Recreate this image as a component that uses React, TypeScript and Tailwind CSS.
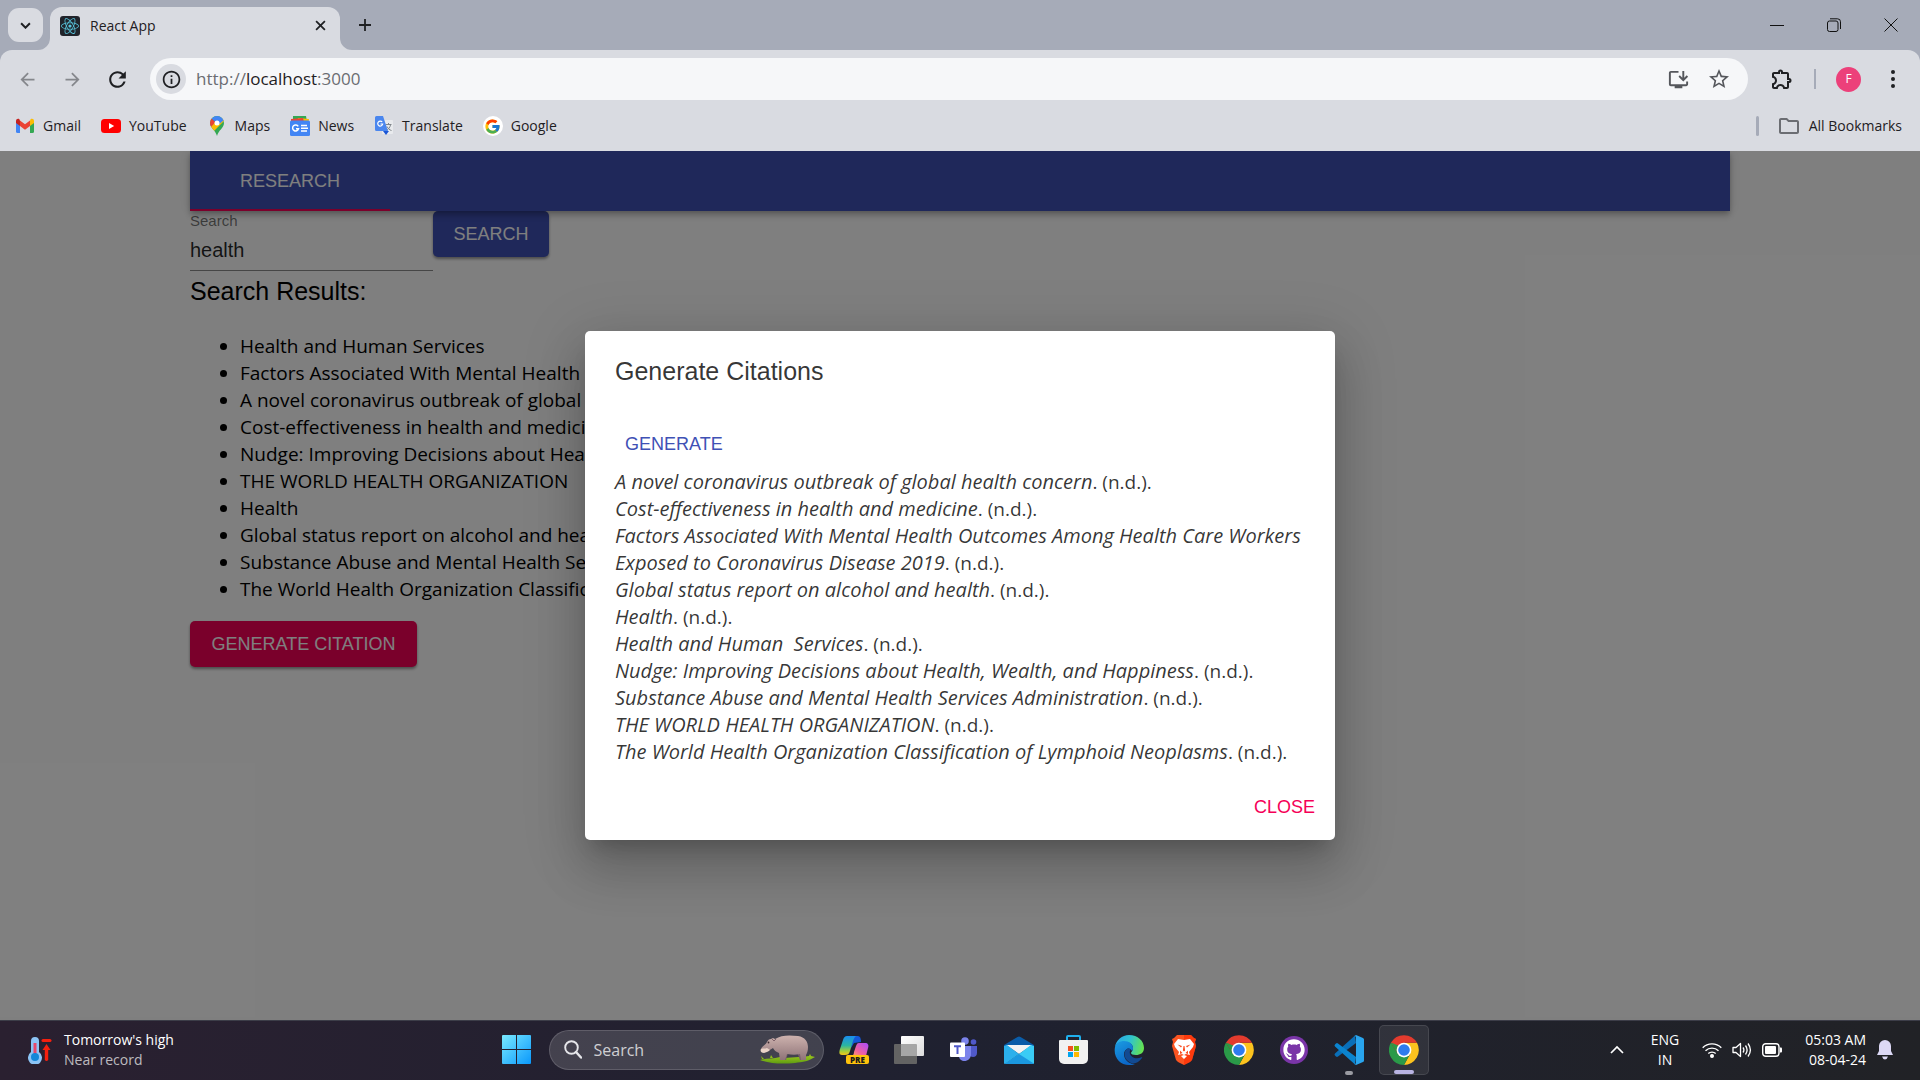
import React from 'react';
import { FaReact, FaGithub } from 'react-icons/fa';
import { FcGoogle } from 'react-icons/fc';
import { MdInstallDesktop, MdStarBorder, MdOutlineExtension, MdOutlineFolder, MdRefresh, MdArrowBack, MdArrowForward, MdInfoOutline } from 'react-icons/md';

const results = [
  'Health and Human Services',
  'Factors Associated With Mental Health',
  'A novel coronavirus outbreak of global',
  'Cost-effectiveness in health and medicine',
  'Nudge: Improving Decisions about Health',
  'THE WORLD HEALTH ORGANIZATION',
  'Health',
  'Global status report on alcohol and health',
  'Substance Abuse and Mental Health Services',
  'The World Health Organization Classification',
];

const citations = [
  'A novel coronavirus outbreak of global health concern',
  'Cost-effectiveness in health and medicine',
  'Factors Associated With Mental Health Outcomes Among Health Care Workers Exposed to Coronavirus Disease 2019',
  'Global status report on alcohol and health',
  'Health',
  'Health and Human\u00a0 Services',
  'Nudge: Improving Decisions about Health, Wealth, and Happiness',
  'Substance Abuse and Mental Health Services Administration',
  'THE WORLD HEALTH ORGANIZATION',
  'The World Health Organization Classification of Lymphoid Neoplasms',
];

function Gmail() {
  return (
    <svg viewBox="0 0 20 20" className="size-5">
      <path d="M1 5v10.500a1.500 1.500 0 0 0 1.500 1.500H5V9z" fill="#4285f4" />
      <path d="M19 5v10.500a1.500 1.500 0 0 1-1.500 1.500H15V9z" fill="#34a853" />
      <path d="M15 4.500V10l4-3V5c0-2-2-2.800-3.400-1.700z" fill="#fbbc04" />
      <path d="M5 10V4.500l5 3.800 5-3.800V10l-5 3.800z" fill="#ea4335" />
      <path d="M1 5v2l4 3V4.500l-.6-1.200C3 2.200 1 3 1 5z" fill="#c5221f" />
    </svg>
  );
}

function YouTube() {
  return (
    <svg viewBox="0 0 20 20" className="size-5">
      <rect y="3" width="20" height="14" rx="3.500" fill="#f00" />
      <path d="M8 7v6l5.200-3z" fill="#fff" />
    </svg>
  );
}

function Maps() {
  return (
    <svg viewBox="0 0 20 20" className="size-5">
      <defs>
        <clipPath id="pin">
          <path d="M10 0a7 7 0 0 0-7 7c0 5 5.500 7 7 13 1.500-6 7-8 7-13a7 7 0 0 0-7-7z" />
        </clipPath>
      </defs>
      <g clipPath="url(#pin)">
        <rect width="20" height="20" fill="#34a853" />
        <path d="M2 13L12.500 1 18 4 5 17z" fill="#fbbc04" />
        <path d="M4.500 2.500l4 3.500L3 12 1 5z" fill="#ea4335" />
        <path d="M4.500 2.500L9 -1h8v5l-6 5-2.500-3z" fill="#4285f4" />
      </g>
      <circle cx="10" cy="7" r="2.500" fill="#fff" />
    </svg>
  );
}

function News() {
  return (
    <svg viewBox="0 0 20 20" className="size-5">
      <path d="M3 0h13l1 6H3z" fill="#34a853" />
      <path d="M8 2l11 1-1 5H6z" fill="#fbbc04" />
      <path d="M1 3l12-1 1 4H1z" fill="#ea4335" />
      <rect y="4.500" width="20" height="15.500" rx="1.500" fill="#4285f4" />
      <path d="M8.200 10.400A3 3 0 1 0 8.500 12.800H6M11 9.500h6M11 12.300h7M11 15h6" fill="none" stroke="#fff" strokeWidth="1.500" />
    </svg>
  );
}

function Translate() {
  return (
    <svg viewBox="0 0 20 20" className="size-5">
      <rect x="8" y="4" width="11" height="14" rx="1" fill="#e8eaed" />
      <path d="M11.500 8.500h6M14.500 7v1.500M16.500 9c-.5 2.500-2 4-4 5.500M13 10.500c1 2 2.500 3.500 4.500 4" stroke="#80868b" fill="none" />
      <path d="M9 15h6l-3 4z" fill="#1a56d6" />
      <path d="M2.500 0H9l5 15H2.500A1.500 1.500 0 0 1 1 13.500v-12A1.500 1.500 0 0 1 2.500 0z" fill="#4a86ee" />
      <path d="M8.200 6A2.500 2.500 0 1 0 8.700 8H6.500" fill="none" stroke="#fff" strokeWidth="1.200" />
    </svg>
  );
}

function Google() {
  return (
    <span className="flex size-5 items-center justify-center rounded-full bg-white">
      <FcGoogle className="size-[17px]" />
    </span>
  );
}

const bookmarks = [
  { name: 'Gmail', Icon: Gmail },
  { name: 'YouTube', Icon: YouTube },
  { name: 'Maps', Icon: Maps },
  { name: 'News', Icon: News },
  { name: 'Translate', Icon: Translate },
  { name: 'Google', Icon: Google },
];

function Start() {
  return (
    <svg viewBox="0 0 29 29" className="size-[29px]">
      <defs>
        <linearGradient id="win" x1="0" y1="0" x2="1" y2="1">
          <stop offset="0" stopColor="#7aeaff" />
          <stop offset="1" stopColor="#0a98fb" />
        </linearGradient>
      </defs>
      <path d="M1 0h13v14H0V1a1 1 0 0 1 1-1zM15 0h13a1 1 0 0 1 1 1v13H15zM0 15h14v14H1a1 1 0 0 1-1-1zM15 15h14v13a1 1 0 0 1-1 1H15z" fill="url(#win)" />
    </svg>
  );
}

function Hippo() {
  return (
    <svg viewBox="0 0 56 30" className="h-[30px] w-[56px]">
      <defs>
        <linearGradient id="hide" x1="0" y1="0" x2="0" y2="1">
          <stop offset="0" stopColor="#cdb2ae" />
          <stop offset="1" stopColor="#8f7478" />
        </linearGradient>
        <linearGradient id="grass" x1="0" y1="0" x2="0" y2="1">
          <stop offset="0" stopColor="#a6cf1d" />
          <stop offset="1" stopColor="#5f9c12" />
        </linearGradient>
      </defs>
      <path d="M0 25c7-2 13-1 20-3l4 1 15-1 2-2 1 2 7-1 1-2 1 2 4 1c-6 4-12 5-20 6-12 1-24 1-35-3z" fill="url(#grass)" />
      <path d="M2 24l-1-3 3 3zM10 23l1-3 2 3z" fill="#8fbf1a" />
      <path d="M23 16l-1 9h4l2-7zM37 17l3 8h5l-1-9z" fill="#77606a" />
      <path d="M1 14c1-3 5-4 6-7 1-2 2-3 4-3l2-1 2 1C21 0 29 0 38 1c7 1 10 6 10 11 0 4-1 6-2 8v5h-5l-1-6c-4 1-8 1-13 0l-2 6h-5l-1-7c-3-1-5-3-6-5-2 1-4 3-8 4-3 1-5-1-4-3z" fill="url(#hide)" />
      <path d="M1 14c2-1 4 0 6-1l3 2c-2 2-4 2-6 3-3 0-4-2-3-4z" fill="#ead3c8" />
      <circle cx="8.500" cy="7.500" r="0.900" fill="#3c2a30" />
      <path d="M12 4l2 2 2-2" fill="none" stroke="#80626a" />
    </svg>
  );
}

function Copilot() {
  return (
    <svg viewBox="0 0 30 30" className="size-[30px]">
      <defs>
        <linearGradient id="cpa" x1="0" y1="0" x2="0" y2="1">
          <stop offset="0" stopColor="#1a8df0" />
          <stop offset="0.500" stopColor="#2bb6a0" />
          <stop offset="0.800" stopColor="#a5cf3a" />
          <stop offset="1" stopColor="#f5c518" />
        </linearGradient>
        <linearGradient id="cpb" x1="1" y1="0" x2="0" y2="1">
          <stop offset="0" stopColor="#a94bff" />
          <stop offset="0.600" stopColor="#f0609e" />
          <stop offset="1" stopColor="#ffa35c" />
        </linearGradient>
      </defs>
      <path d="M13 1h6c2 0 3 2 3 6l-7 1-3 5z" fill="#1458d8" />
      <path d="M8 1h10c-2 0-3 2-4 5l-3 10c-1 3-2 4-5 4H3c-3 0-3-3-2-6L4 5c1-3 2-4 4-4z" fill="url(#cpa)" />
      <path d="M20 8h6c3 0 4 2 3 5l-2 8H12c2 0 3-2 3-4l2-6c1-2 1-3 3-3z" fill="url(#cpb)" />
      <rect x="7" y="20" width="23" height="9" rx="2" fill="#ffc30b" />
      <text x="18.500" y="27.500" textAnchor="middle" fontSize="8" fontWeight="800" fontFamily="Open Sans, sans-serif" fill="#1b1b1b">PRE</text>
    </svg>
  );
}

function TaskView() {
  return (
    <svg viewBox="0 0 30 28" className="h-[28px] w-[30px]">
      <defs>
        <linearGradient id="tv" x1="0" y1="0" x2="1" y2="1">
          <stop offset="0" stopColor="#fff" />
          <stop offset="1" stopColor="#dcdcdc" />
        </linearGradient>
      </defs>
      <rect x="0" y="8" width="23" height="20" rx="1" fill="#636363" />
      <rect x="7" y="0" width="23" height="20" rx="1" fill="url(#tv)" />
      <path d="M7 8h15a1 1 0 0 1 1 1v11H8a1 1 0 0 1-1-1z" fill="#a6a6a6" />
    </svg>
  );
}

function Teams() {
  return (
    <svg viewBox="0 0 28 26" className="h-[26px] w-[28px]">
      <circle cx="23.500" cy="5" r="2.800" fill="#5059c9" />
      <path d="M19 9h8v7c0 4-4 5-7 3z" fill="#5059c9" />
      <circle cx="15" cy="4" r="3.800" fill="#7b83eb" />
      <path d="M10 9h11v8c0 9-12 9-12 2z" fill="#7b83eb" />
      <rect y="5.500" width="15" height="14.500" rx="1" fill="#fff" />
      <path d="M4 9.200h7M7.500 9v8" stroke="#5059c9" strokeWidth="2" fill="none" />
    </svg>
  );
}

function Mail() {
  return (
    <svg viewBox="0 0 30 28" className="h-[28px] w-[30px]">
      <path d="M0 9L13.500 1q1.500-1 3 0L30 9v3H0z" fill="#0a5ca8" />
      <path d="M2 9h26L15 18z" fill="#f3f3f3" />
      <path d="M0 10l3-1 12 9-14 10a1 1 0 0 1-1-1z" fill="#2bb0ec" />
      <path d="M30 10v17a1 1 0 0 1-1 1H1L15 18l12-9z" fill="#3accf5" />
      <path d="M15 18l14.800 9.500L29 28H1z" fill="#1b98e0" />
    </svg>
  );
}

function Store() {
  return (
    <svg viewBox="0 0 29 29" className="size-[29px]">
      <path d="M8 6V2a1 1 0 0 1 1-1h11a1 1 0 0 1 1 1v4" fill="none" stroke="#1fb0ee" strokeWidth="2" />
      <path d="M0 6a1 1 0 0 1 1-1h27a1 1 0 0 1 1 1v18a5 5 0 0 1-5 5H5a5 5 0 0 1-5-5z" fill="#f1f1f1" />
      <path d="M9 11h5v5H9z" fill="#f25022" />
      <path d="M15 11h5v5h-5z" fill="#7fba00" />
      <path d="M9 17h5v5H9z" fill="#00a4ef" />
      <path d="M15 17h5v5h-5z" fill="#ffb900" />
    </svg>
  );
}

function Edge() {
  return (
    <svg viewBox="0 0 30 30" className="size-[30px]">
      <defs>
        <linearGradient id="ea" x1="0" y1="0.300" x2="1" y2="0.500">
          <stop offset="0" stopColor="#2aa7e8" />
          <stop offset="0.500" stopColor="#2fc3cf" />
          <stop offset="1" stopColor="#66e34f" />
        </linearGradient>
        <linearGradient id="eb" x1="0" y1="0" x2="0.500" y2="1">
          <stop offset="0" stopColor="#1b9de2" />
          <stop offset="1" stopColor="#0b66c8" />
        </linearGradient>
      </defs>
      <path d="M1 12C2 5 8 0 15 0c9 0 15 6 15 13 0 5-4 7-8 7-3 0-5-1-5-2s2-2 2-5c0-4-4-6-8-6-5 0-9 2-10 5z" fill="url(#ea)" />
      <path d="M1 12c1-4 5-6 9-6 5 0 9 3 9 7 0 1 0 2-1 3-1-2-3-3-5-2-4 2-4 8 0 12 3 3 7 3 8 3-2 1-4 1-6 1C6 30-1 22 1 12z" fill="url(#eb)" />
      <path d="M13 14c-4 3-3 9 1 12 4 4 10 3 14-3 .5-.8 0-1-.6-.8C22 25 17 22 16 19c-.6-2 0-4 1-4-1-1-2-2-4-1z" fill="#124a92" />
    </svg>
  );
}

function Brave() {
  return (
    <svg viewBox="0 0 26 30" className="h-[30px] w-[26px]">
      <path d="M6 0h14l3 3 2 1-1 3 1 4-4 14-2 2-6 3-6-3-2-2L1 11l1-4-1-3 2-1z" fill="#fb5421" />
      <path d="M13 0h7l3 3 2 1-1 3 1 4-4 14-2 2-6 3z" fill="#ff2a00" opacity=".6" />
      <path d="M7 4l6 1 6-1 4 5-1 3-4 5 1 3-4-1-2 1-2-1-4 1 1-3-4-5-1-3zM10 21l3-1 3 1-3 3z" fill="#fff" />
      <path d="M6.500 9.500l4.500 1.500-1 1.500zM19.500 9.500L15 11l1 1.500zM12.500 11h1l.6 4.500-1.100 1-1.100-1zM9 15.500l2.500 2.500L9 19zM17 15.500L14.500 18l2.500 1z" fill="#fb4a1c" />
    </svg>
  );
}

function Chrome() {
  return (
    <svg viewBox="0 0 48 48" className="size-[30px]">
      <path d="M24 12.500h20.800A24 24 0 0 1 24 48l10-18z" fill="#fcc31e" />
      <path d="M3.200 12l10.900 18L24 35.500l9.500-5.500L24 48A24 24 0 0 1 3.200 12z" fill="#2a9a48" />
      <path d="M3.200 12A24 24 0 0 1 44.800 12.500H24L14 30z" fill="#e33b2e" />
      <path d="M3.200 12l10.900 18 3-12z" fill="#2a9a48" />
      <circle cx="24" cy="24" r="11.800" fill="#fff" />
      <circle cx="24" cy="24" r="9.300" fill="#2e7bee" />
    </svg>
  );
}

function GithubDesktop() {
  return (
    <span className="flex size-7 items-center justify-center rounded-full bg-[#7a35a8]">
      <FaGithub className="size-[22px] text-white" />
    </span>
  );
}

function VsCode() {
  return (
    <svg viewBox="0 0 30 30" className="size-[30px]">
      <path d="M1 18.500L21 0.500 22 8 4 21.500q-1 .8-2 0l-1-1q-1-1 0-2z" fill="#0a6fb8" />
      <path d="M1 11.500L21 29.500 22 22 4 8.500q-1-.8-2 0l-1 1q-1 1 0 2z" fill="#0b84cf" />
      <path d="M22 0l7 3q1 .5 1 1.500v21q0 1-1 1.500l-7 3-1.500-1Q22 29 22 27.500v-25Q22 1 20.500 1z" fill="#29a5ee" />
    </svg>
  );
}

const taskbarApps = [
  { name: 'Copilot', Icon: Copilot },
  { name: 'Task View', Icon: TaskView },
  { name: 'Teams', Icon: Teams },
  { name: 'Mail', Icon: Mail },
  { name: 'Microsoft Store', Icon: Store },
  { name: 'Edge', Icon: Edge },
  { name: 'Brave', Icon: Brave },
  { name: 'Chrome', Icon: Chrome },
  { name: 'GitHub Desktop', Icon: GithubDesktop },
  { name: 'Visual Studio Code', Icon: VsCode, running: true },
  { name: 'Chrome window', Icon: Chrome, active: true },
];

function TabStrip() {
  return (
    <div className="flex h-[50px] items-start bg-[#a6abb8] pl-2">
      <button aria-label="Search tabs" className="mt-2 flex h-[34px] w-[35px] items-center justify-center rounded-[11px] bg-[#d9dbe1]">
        <svg viewBox="0 0 10 6" className="h-[7px] w-[11px]"><path d="M1 1l4 4 4-4" fill="none" stroke="#1f2023" strokeWidth="1.800" /></svg>
      </button>
      <div className="relative ml-[7px] mt-[7px] flex h-[43px] w-[290px] items-center rounded-t-[12px] bg-[#d9dbe1] pb-[6px] pl-[10px] pr-[12px]">
        <svg viewBox="0 0 12 12" className="absolute -left-3 bottom-0 size-3"><path d="M12 0v12H0A12 12 0 0 0 12 0z" fill="#d9dbe1" /></svg>
        <svg viewBox="0 0 12 12" className="absolute -right-3 bottom-0 size-3"><path d="M0 0v12h12A12 12 0 0 1 0 0z" fill="#d9dbe1" /></svg>
        <span className="flex size-5 items-center justify-center rounded-[3px] bg-[#20232a]"><FaReact className="size-[18px] text-[#58c4dc]" /></span>
        <span className="ml-[10px] flex-1 text-sm text-[#1f2023]">React App</span>
        <button aria-label="Close tab" className="flex size-4 items-center justify-center">
          <svg viewBox="0 0 10 10" className="size-[11px]"><path d="M1 1l8 8M9 1L1 9" stroke="#1f2023" strokeWidth="1.600" /></svg>
        </button>
      </div>
      <button aria-label="New tab" className="ml-[17px] mt-[17px] flex size-4 items-center justify-center">
        <svg viewBox="0 0 14 14" className="size-[14px]"><path d="M7 1v12M1 7h12" stroke="#1f2023" strokeWidth="1.800" /></svg>
      </button>
      <div className="flex-1" />
      <div className="flex h-[50px] items-center gap-[43px] pr-[22px]">
        <button aria-label="Minimize"><svg viewBox="0 0 14 14" className="size-[14px]"><path d="M0 7.500h14" stroke="#111" /></svg></button>
        <button aria-label="Restore"><svg viewBox="0 0 14 14" className="size-[14px]"><rect x="0.500" y="3" width="10.500" height="10.500" rx="2" fill="none" stroke="#111" /><path d="M3 .8h7.500a3 3 0 0 1 3 3V11" fill="none" stroke="#111" /></svg></button>
        <button aria-label="Close"><svg viewBox="0 0 14 14" className="size-[14px]"><path d="M.5.5l13 13M13.500.5l-13 13" stroke="#111" /></svg></button>
      </div>
    </div>
  );
}

function Toolbar() {
  return (
    <div className="bg-[#a6abb8]">
      <div className="rounded-t-[12px] bg-[#d9dbe1]">
        <div className="flex h-[58px] items-center pl-[17px] pr-[22px] text-[#1f2023]">
          <button aria-label="Back" className="text-[#85878c]"><MdArrowBack className="size-[21px]" /></button>
          <button aria-label="Forward" className="ml-6 text-[#85878c]"><MdArrowForward className="size-[21px]" /></button>
          <button aria-label="Reload" className="ml-[22px]"><MdRefresh className="size-[25px]" /></button>
          <div className="ml-5 flex h-[42px] flex-1 items-center rounded-full bg-[#f6f7f9] pl-[6px] pr-[17px]">
            <button aria-label="Site information" className="flex size-[30px] items-center justify-center rounded-full bg-[#d9dbe1]"><MdInfoOutline className="size-[21px]" /></button>
            <a href="http://localhost:3000" className="ml-[10px] flex-1 text-[17px] leading-6 text-[#6b6d72]">http://<span className="text-[#1f2023]">localhost</span>:3000</a>
            <button aria-label="Install app" className="text-[#55575c]"><MdInstallDesktop className="size-[23px]" /></button>
            <button aria-label="Bookmark this tab" className="ml-[17px] text-[#55575c]"><MdStarBorder className="size-[24px]" /></button>
          </div>
          <button aria-label="Extensions" className="ml-[22px]"><MdOutlineExtension className="size-[24px]" /></button>
          <span className="ml-5 h-5 w-[2px] bg-[#a6abb8]" />
          <button aria-label="Profile" className="ml-5 flex size-[25px] items-center justify-center rounded-full bg-[#ec407a] text-xs text-white">F</button>
          <button aria-label="Menu" className="ml-[27px]">
            <svg viewBox="0 0 10 18" className="h-[18px] w-[10px]"><g fill="#1f2023"><circle cx="5" cy="2" r="2" /><circle cx="5" cy="9" r="2" /><circle cx="5" cy="16" r="2" /></g></svg>
          </button>
        </div>
        <nav aria-label="Bookmarks" className="flex h-[43px] items-center gap-5 pb-[7px] pl-[15px] pr-[18px] text-sm text-[#1f2023]">
          {bookmarks.map(({ name, Icon }) => (
            <a key={name} href="#" className="flex items-center gap-2"><Icon />{name}</a>
          ))}
          <span className="ml-auto h-5 w-[3px] rounded-full bg-[#a6abb8]" />
          <button className="-ml-[2px] flex items-center gap-2"><MdOutlineFolder className="size-[24px] text-[#6b6d72]" />All Bookmarks</button>
        </nav>
      </div>
    </div>
  );
}

function Research() {
  return (
    <div className="mx-auto w-full max-w-[1600px] px-[30px] text-black">
      <header className="relative flex h-[60px] bg-[#3f51b5] font-['Liberation_Sans',sans-serif] shadow-[0_2px_5px_-1px_rgba(0,0,0,0.2),0_5px_6px_0_rgba(0,0,0,0.14),0_1px_12px_0_rgba(0,0,0,0.12)]">
        <button className="w-[200px] border-b-2 border-[#f50057] pt-[2px] text-lg text-white">RESEARCH</button>
      </header>
      <form className="flex items-start font-['Liberation_Sans',sans-serif]" onSubmit={(e) => e.preventDefault()}>
        <div className="flex w-[243px] flex-col border-b border-black/45">
          <label htmlFor="query" className="text-[15px] leading-5 text-black/55">Search</label>
          <input id="query" type="text" defaultValue="health" className="h-[39px] w-full bg-transparent text-xl text-black/85 outline-none" />
        </div>
        <button className="h-[46px] w-[116px] rounded-[5px] bg-[#3f51b5] text-lg text-white shadow-[0_2px_3px_rgba(0,0,0,0.4)]">SEARCH</button>
      </form>
      <h2 className="font-['Liberation_Sans',sans-serif] text-[25px] leading-10">Search Results:</h2>
      <ul className="mt-[22px] list-disc pl-[50px] text-[19px] leading-[27px]">
        {results.map((r) => <li key={r}>{r}</li>)}
      </ul>
      <button className="mt-[18px] h-[46px] w-[227px] rounded-[5px] bg-[#f50057] font-['Liberation_Sans',sans-serif] text-lg text-white shadow-[0_2px_3px_rgba(0,0,0,0.4)]">GENERATE CITATION</button>
    </div>
  );
}

function CitationDialog() {
  return (
    <div className="absolute inset-0 flex items-center justify-center bg-black/50">
      <div role="dialog" aria-labelledby="dialog-title" className="w-[750px] rounded-[5px] bg-white text-black/80 shadow-[0_14px_19px_-9px_rgba(0,0,0,0.2),0_30px_48px_4px_rgba(0,0,0,0.14),0_11px_58px_10px_rgba(0,0,0,0.12)]">
        <h2 id="dialog-title" className="px-[30px] py-5 font-['Liberation_Sans',sans-serif] text-[25px] leading-10">Generate Citations</h2>
        <div className="px-[30px] pb-2 pt-[10px] text-[19px] leading-[27px]">
          <button className="mb-[2px] block h-[46px] px-[10px] font-['Liberation_Sans',sans-serif] text-lg text-[#3f51b5]">GENERATE</button>
          {citations.map((c) => (
            <p key={c}><i className="text-xl leading-none">{c}</i>. (n.d.).</p>
          ))}
        </div>
        <div className="flex justify-end p-[10px]">
          <button className="h-[46px] px-[10px] font-['Liberation_Sans',sans-serif] text-lg text-[#f50057]">CLOSE</button>
        </div>
      </div>
    </div>
  );
}

function Taskbar() {
  return (
    <footer className="grid h-[60px] grid-cols-[1fr_auto_1fr] items-center border-t border-[#3c3d48] bg-linear-to-r from-[#2a2030] via-[#1f2130] to-[#212226] pb-[2px] text-white">
      <button className="flex items-center gap-3 pl-7 text-left">
        <svg viewBox="0 0 24 28" className="h-[28px] w-6">
          <path d="M3 5a4 4 0 0 1 8 0v11a7 7 0 1 1-8 0z" fill="#8cc4f5" />
          <path d="M5.500 7h3v12h-3z" fill="#e8476a" />
          <circle cx="7" cy="21" r="4" fill="#1487d8" />
          <path d="M15 4.500h7" stroke="#f5200f" strokeWidth="3" strokeLinecap="round" />
          <path d="M18.500 8l4 6h-2.300v10q-1.700 2-3.400 0V14h-2.300z" fill="#f5200f" />
        </svg>
        <span className="flex flex-col text-[14px] leading-5"><span>Tomorrow's high</span><span className="text-white/70">Near record</span></span>
      </button>
      <div className="flex items-center gap-[5px]">
        <button aria-label="Start" className="flex size-[50px] items-center justify-center"><Start /></button>
        <label className="ml-[2px] flex h-10 w-[275px] items-center rounded-full border border-white/15 bg-white/15 pl-[14px] pr-[7px]">
          <svg viewBox="0 0 18 19" className="h-[19px] w-[18px]"><circle cx="7.500" cy="7.500" r="6.300" fill="none" stroke="#e6e6ea" strokeWidth="1.900" /><path d="M12 12l5 5.500" stroke="#e6e6ea" strokeWidth="2.400" strokeLinecap="round" /></svg>
          <input type="text" aria-label="Search" placeholder="Search" className="ml-3 min-w-0 flex-1 bg-transparent text-base placeholder:text-white/75 outline-none" />
          <Hippo />
        </label>
        {taskbarApps.map(({ name, Icon, running, active }) => (
          <button key={name} aria-label={name} className={active ? 'relative flex size-[50px] items-center justify-center rounded-[5px] border border-white/10 bg-white/8' : 'relative flex size-[50px] items-center justify-center'}>
            <Icon />
            {running && <span className="absolute bottom-0 h-1 w-2 rounded-full bg-[#9a9ba2]" />}
            {active && <span className="absolute bottom-0 h-1 w-5 rounded-full bg-[#b9b4e3]" />}
          </button>
        ))}
      </div>
      <div className="flex items-center justify-end pr-[27px] text-[14px] leading-5">
        <button aria-label="Show hidden icons"><svg viewBox="0 0 14 9" className="h-[9px] w-[14px]"><path d="M1 8l6-6 6 6" fill="none" stroke="#fff" strokeWidth="1.700" /></svg></button>
        <span className="ml-[27px] text-center">ENG<br />IN</span>
        <button aria-label="Network, volume and battery" className="ml-[23px] flex items-center gap-[10px]">
          <svg viewBox="0 0 20 16" className="h-4 w-5" fill="none" stroke="#fff" strokeWidth="1.400"><path d="M.7 5.800a13 13 0 0 1 18.600 0M3.500 8.800a9.200 9.200 0 0 1 13 0M6.300 11.600a5.300 5.300 0 0 1 7.400 0" /><circle cx="10" cy="14" r="1.300" fill="#fff" /></svg>
          <svg viewBox="0 0 20 16" className="h-4 w-5" fill="none" stroke="#fff" strokeWidth="1.300"><path d="M1 5.500h3L8.500 1.500v13L4 10.500H1z" strokeLinejoin="round" /><path d="M11 5.500q1.800 2.500 0 5M13.500 3.500q3.200 4.500 0 9M16 1.500q4.800 6.500 0 13" /></svg>
          <svg viewBox="0 0 20 14" className="h-[14px] w-5"><rect x="0.700" y="0.700" width="16.300" height="12.600" rx="3" fill="none" stroke="#fff" strokeWidth="1.400" /><rect x="3" y="3" width="11" height="8" rx="1" fill="#fff" /><path d="M18 4.500h1a1 1 0 0 1 1 1v3a1 1 0 0 1-1 1h-1z" fill="#fff" /></svg>
        </button>
        <span className="ml-[23px] text-right">05:03 AM<br />08-04-24</span>
        <button aria-label="Notifications" className="ml-[11px]"><svg viewBox="0 0 16 20" className="h-5 w-4"><path d="M8 0a6 6 0 0 1 6 6v5l2 4H0l2-4V6a6 6 0 0 1 6-6zM5 16.500h6q-1 3-3 3t-3-3z" fill="#dcd8f5" /></svg></button>
      </div>
    </footer>
  );
}

export default function App() {
  return (
    <div className="flex h-screen flex-col overflow-hidden font-['Open_Sans',sans-serif]">
      <TabStrip />
      <Toolbar />
      <main className="relative min-h-0 flex-1 overflow-hidden bg-white">
        <Research />
        <CitationDialog />
      </main>
      <Taskbar />
    </div>
  );
}
